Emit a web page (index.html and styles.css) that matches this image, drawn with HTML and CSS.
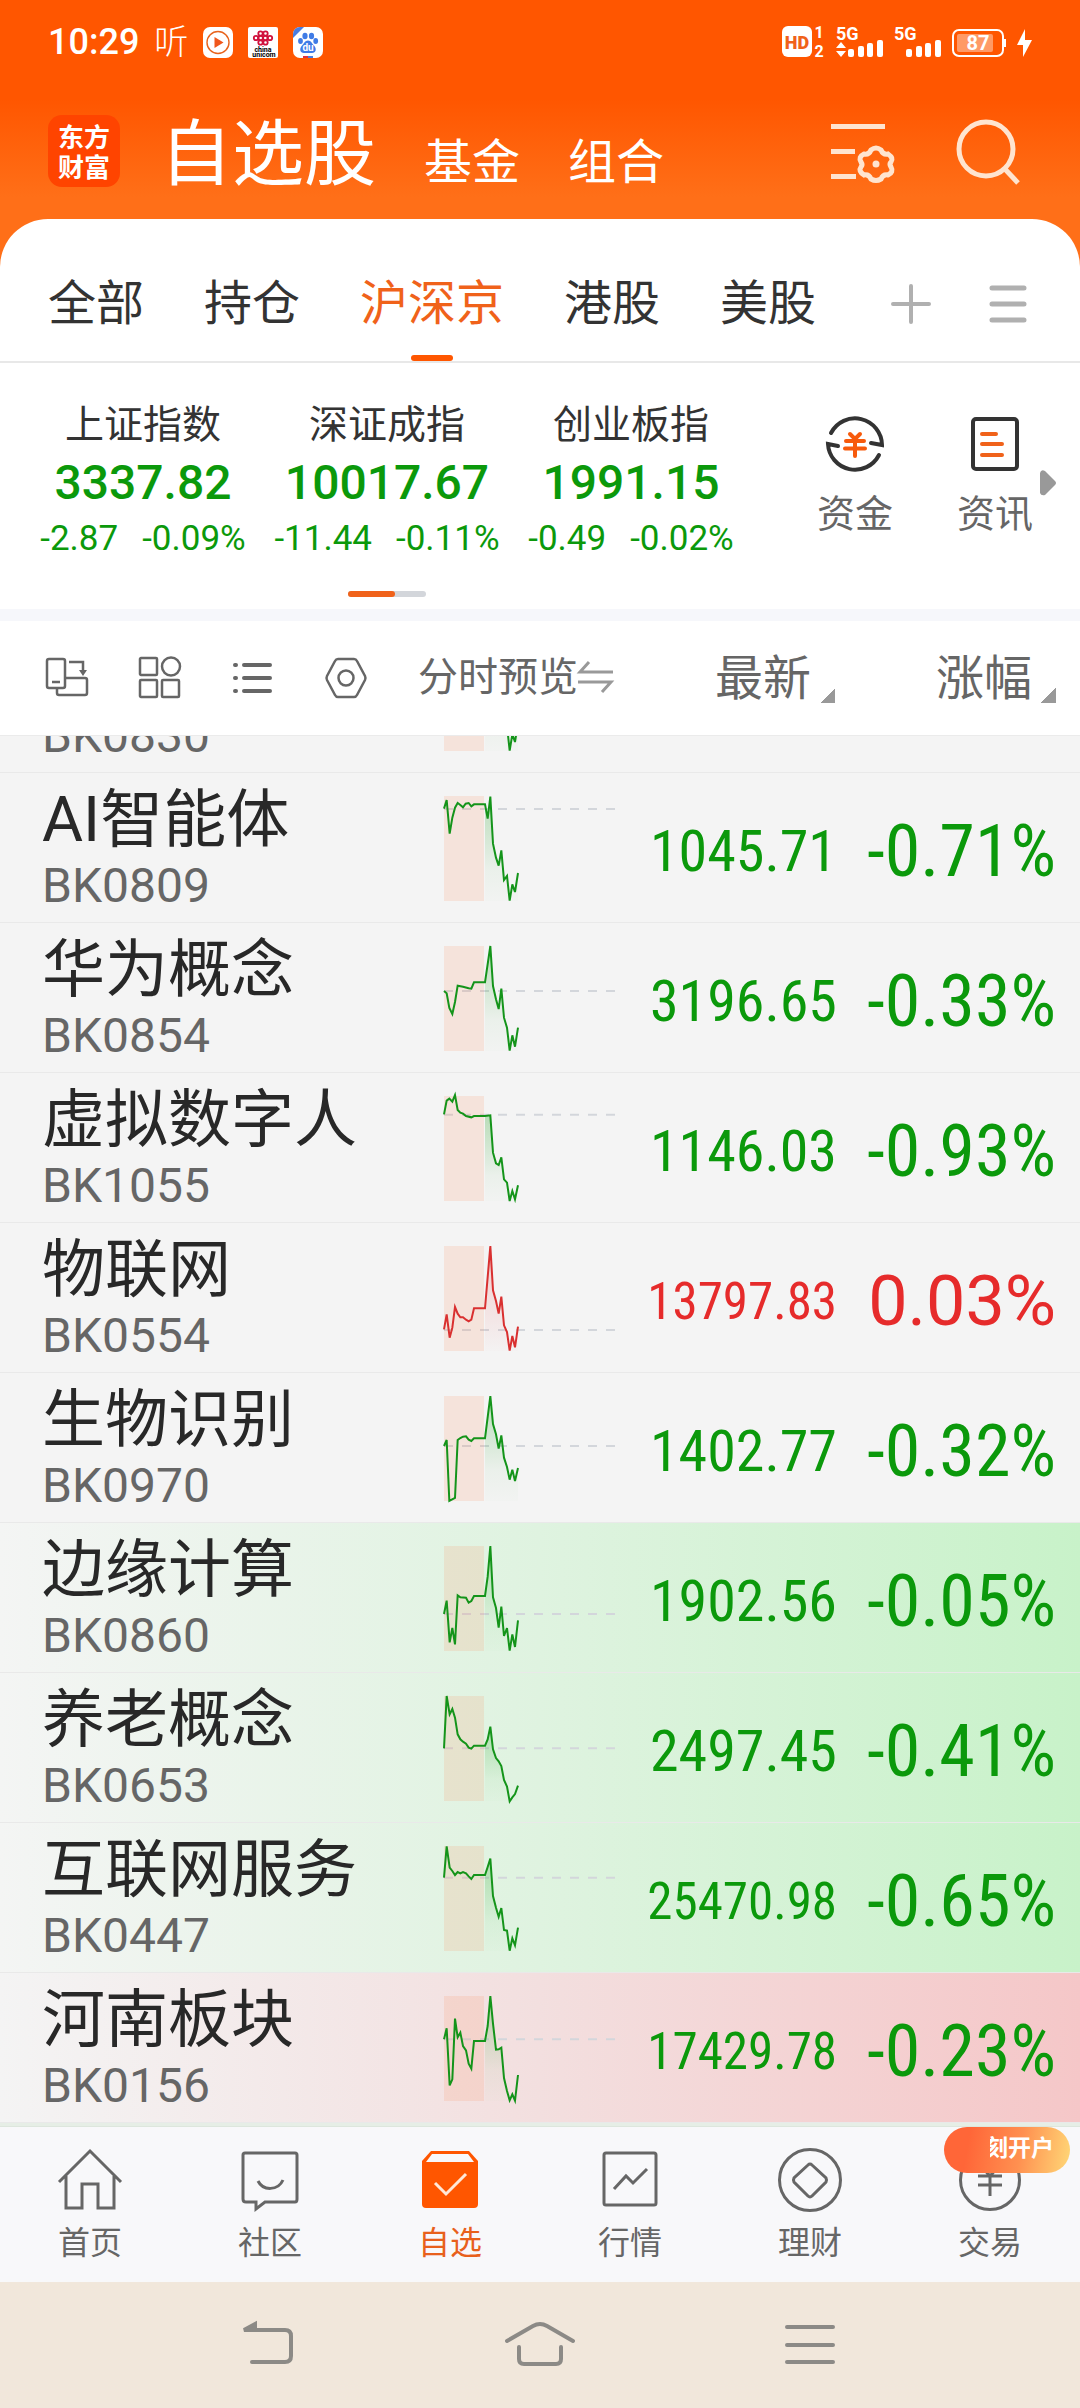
FILE: index.html
```html
<!DOCTYPE html>
<html lang="zh-CN">
<head>
<meta charset="UTF-8">
<meta name="viewport" content="width=device-width, initial-scale=1.0">
<title>自选股</title>
<link rel="stylesheet" href="styles.css">
</head>
<body>

<header class="top">
    <div class="status">
        <div class="status-left">
            <span class="clock">10:29</span>
            <span class="listen">听</span>
            <svg width="30" height="31" viewBox="0 0 30 31">
                <rect width="30" height="31" rx="7" fill="#fff"/>
                <circle cx="15" cy="15.500" r="11" fill="none" stroke="#e8631c" stroke-width="1.400"/>
                <path d="M11.500 10v11l9-5.500z" fill="#f0561c"/>
            </svg>
            <svg width="30" height="31" viewBox="0 0 30 31">
                <rect width="30" height="31" rx="2" fill="#fff"/>
                <g fill="none" stroke="#d0103c" stroke-width="1.800">
                    <circle cx="12.500" cy="6.500" r="2.200"/><circle cx="17.500" cy="6.500" r="2.200"/>
                    <circle cx="8" cy="11" r="2.200"/><circle cx="12.700" cy="11" r="2.200"/>
                    <circle cx="17.300" cy="11" r="2.200"/><circle cx="22" cy="11" r="2.200"/>
                    <circle cx="12.500" cy="15.500" r="2.200"/><circle cx="17.500" cy="15.500" r="2.200"/>
                </g>
                <text x="15" y="25" class="tiny">china</text>
                <text x="16" y="30" class="tiny">unicom</text>
            </svg>
            <svg width="30" height="31" viewBox="0 0 30 31">
                <rect width="30" height="31" rx="7" fill="#fff"/>
                <path d="M0 11V7a7 7 0 0 1 7-7h4z" fill="#4a7de0"/>
                <g fill="#3f7be6">
                    <ellipse cx="12" cy="9" rx="2.600" ry="3.300"/><ellipse cx="18.500" cy="9" rx="2.600" ry="3.300"/>
                    <ellipse cx="7.500" cy="14" rx="2.400" ry="3"/><ellipse cx="22.700" cy="14" rx="2.400" ry="3"/>
                    <path d="M15 13.500c3 0 4 3 6 5 3 3 2 7.500-2 7.500h-8c-4 0-5-4.500-2-7.500 2-2 3-5 6-5z"/>
                </g>
                <text x="15" y="24" class="du">du</text>
                <path d="M10 29h5v2h-5z" fill="#e0323c"/><path d="M15 29h5v2h-5z" fill="#4a7de0"/>
            </svg>
        </div>
        <div class="status-right">
            <svg width="44" height="32" viewBox="0 0 44 32">
                <rect y="0" width="30" height="31" rx="6" fill="#fff"/>
                <text x="15" y="23" class="hd">HD</text>
                <text x="37" y="12" class="sim">1</text>
                <text x="37" y="31" class="sim">2</text>
            </svg>
            <svg width="48" height="32" viewBox="0 0 48 32">
                <text x="0" y="14" class="net">5G</text>
                <path d="M5 16l5 6H0zM0 25h10l-5 6z" fill="#fff"/>
                <g fill="#fff"><rect x="12" y="23" width="6" height="8" rx="2"/><rect x="22" y="20" width="6" height="11" rx="2"/><rect x="31" y="17" width="6" height="14" rx="2"/><rect x="41" y="14" width="6" height="17" rx="2"/></g>
            </svg>
            <svg width="48" height="32" viewBox="0 0 48 32">
                <text x="0" y="14" class="net">5G</text>
                <g fill="#fff"><rect x="12" y="23" width="6" height="8" rx="2"/><rect x="22" y="20" width="6" height="11" rx="2"/><rect x="31" y="17" width="6" height="14" rx="2"/><rect x="41" y="14" width="6" height="17" rx="2"/></g>
            </svg>
            <svg width="55" height="32" viewBox="0 0 55 32">
                <rect x="1" y="4" width="50" height="26" rx="6" fill="none" stroke="#fff" stroke-width="2"/>
                <rect x="5" y="8" width="36" height="18" rx="2" fill="#ff9a66"/>
                <rect x="52" y="13" width="2" height="8" fill="#fff"/>
                <text x="26" y="24" class="battery">87</text>
            </svg>
            <svg width="15" height="32" viewBox="0 0 15 32">
                <path d="M8 3L0 19h6l0 12 9-17H8z" fill="#fff"/>
            </svg>
        </div>
    </div>
    <nav class="titlebar">
        <div class="logo"><span>东方</span><span>财富</span></div>
        <a href="#" class="title-big">自选股</a>
        <a href="#">基金</a>
        <a href="#">组合</a>
        <button class="manage" aria-label="管理">
            <svg width="64" height="66" viewBox="0 0 64 66" fill="none" stroke="#ffe4cf" stroke-width="5">
                <path d="M0 8.500h54M0 33.500h24M0 58.500h25"/>
                <path d="M40 32q5-4 10 0 2 5 7 4 6 4 3 8-2 2 0 5 3 5-3 8-5-1-7 4-5 3-10 0-2-5-7-4-6-4-3-8 2-2 0-5-3-5 3-8 5 1 7-4z"/>
                <circle cx="45" cy="46" r="3.500" fill="#ffe4cf" stroke="none"/>
            </svg>
        </button>
        <button class="search" aria-label="搜索">
            <svg width="64" height="66" viewBox="0 0 64 66" fill="none" stroke="#ffe4cf" stroke-width="5">
                <circle cx="29" cy="31" r="27"/>
                <path d="M47 50l14 15"/>
            </svg>
        </button>
    </nav>
</header>

<main class="sheet">
    <nav class="tabs">
        <a href="#">全部</a>
        <a href="#">持仓</a>
        <a href="#" class="active">沪深京</a>
        <a href="#">港股</a>
        <a href="#">美股</a>
        <button class="add" aria-label="添加">
            <svg width="40" height="40" viewBox="0 0 40 40" stroke="#b0b0b0" stroke-width="4" stroke-linecap="round"><path d="M2 20h36M20 2v36"/></svg>
        </button>
        <button aria-label="分组">
            <svg width="40" height="40" viewBox="0 0 40 40" stroke="#b0b0b0" stroke-width="5" stroke-linecap="round"><path d="M4 4h32M4 20h32M4 36h32"/></svg>
        </button>
    </nav>

    <section class="market">
        <div class="indices">
            <div class="index">
                <span class="index-name">上证指数</span>
                <strong>3337.82</strong>
                <span class="change"><span>-2.87</span><span>-0.09%</span></span>
            </div>
            <div class="index">
                <span class="index-name">深证成指</span>
                <strong>10017.67</strong>
                <span class="change"><span>-11.44</span><span>-0.11%</span></span>
            </div>
            <div class="index">
                <span class="index-name">创业板指</span>
                <strong>1991.15</strong>
                <span class="change"><span>-0.49</span><span>-0.02%</span></span>
            </div>
            <div class="pager"><i></i></div>
        </div>
        <a href="#" class="quick">
            <svg width="60" height="60" viewBox="0 0 60 60" fill="none" stroke="#333" stroke-width="4" stroke-linecap="round">
                <path d="M6 19A27 27 0 0 1 57 31l-11-2M54 41A27 27 0 0 1 3 30l10 2"/>
                <path d="M25 20l5 5 5-5M21 27h18M20 34.500h20M30 26v16" stroke="#f75a0c"/>
            </svg>
            <span>资金</span>
        </a>
        <a href="#" class="quick quick-news">
            <svg width="60" height="60" viewBox="0 0 60 60" fill="none" stroke="#333" stroke-width="4" stroke-linecap="round">
                <rect x="8" y="5" width="44" height="50" rx="3"/>
                <path d="M17 20h14M17 30h20M17 41h20" stroke="#f0621a"/>
            </svg>
            <span>资讯</span>
        </a>
        <svg class="more" width="16" height="26" viewBox="0 0 16 26"><path d="M0 3q1-4 5-2l10 10q2 2 0 4L5 25q-4 1-5-2z" fill="#999"/></svg>
    </section>

    <section class="toolbar">
        <button aria-label="横屏">
            <svg width="42" height="42" viewBox="0 0 42 42" fill="none" stroke="#666" stroke-width="2.500">
                <rect x="1" y="2" width="18" height="29" rx="2"/><path d="M6 25h8M11 31v5q0 2 2 2h26q2 0 2-2V23q0-2-2-2H19M23 5h14v10"/><path d="M33 13h8l-4 6z" fill="#666" stroke="none"/>
            </svg>
        </button>
        <button aria-label="宫格">
            <svg width="42" height="42" viewBox="0 0 42 42" fill="none" stroke="#666" stroke-width="2.500">
                <rect x="1" y="1" width="17" height="17" rx="1"/><circle cx="32" cy="9.500" r="9"/><rect x="1" y="23" width="17" height="17" rx="1"/><rect x="23" y="23" width="17" height="17" rx="1"/>
            </svg>
        </button>
        <button aria-label="列表">
            <svg width="42" height="42" viewBox="0 0 42 42" stroke="#666" stroke-width="4" stroke-linecap="round">
                <path d="M3 8h1M3 21h1M3 34h1M12 8h26M12 21h26M12 34h26"/>
            </svg>
        </button>
        <button aria-label="设置">
            <svg width="42" height="42" viewBox="0 0 42 42" fill="none" stroke="#666" stroke-width="2.500" stroke-linejoin="round">
                <path d="M13 2h16q2 0 3 2l8 15q1 2 0 4l-8 15q-1 2-3 2H13q-2 0-3-2L2 23q-1-2 0-4l8-15q1-2 3-2z"/><circle cx="21" cy="21" r="7.500"/>
            </svg>
        </button>
        <button class="preview">分时预览<svg width="36" height="32" viewBox="0 0 36 32" fill="none" stroke="#999" stroke-width="3"><path d="M11 1L2 11h33M0 21h33l-9 10"/></svg></button>
        <button class="sort">最新<i></i></button>
        <button class="sort">涨幅<i></i></button>
    </section>

    <div class="list">
        <svg width="0" height="0" class="defs">
            <linearGradient id="fade-down" x1="0" y1="0" x2="0" y2="1"><stop offset="0" stop-color="#0b990b" stop-opacity=".26"/><stop offset=".7" stop-color="#0b990b" stop-opacity=".04"/><stop offset="1" stop-color="#0b990b" stop-opacity=".01"/></linearGradient>
            <linearGradient id="fade-up" x1="0" y1="0" x2="0" y2="1"><stop offset="0" stop-color="#e62b2b" stop-opacity=".2"/><stop offset="1" stop-color="#e62b2b" stop-opacity=".01"/></linearGradient>
        </svg>
        <table>
            <tbody id="stocks"></tbody>
        </table>
    </div>
</main>

<nav class="bottom">
    <a href="#">
        <svg width="66" height="66" viewBox="0 0 66 66"><path d="M2 35L33 4l31 31M9 29v32h16V37h16v24h16V29"/></svg>
        首页
    </a>
    <a href="#">
        <svg width="66" height="66" viewBox="0 0 66 66"><path d="M8 6h50q2 0 2 2v44q0 3-2 3H28l-9 7v-7H9q-3 0-3-3V8q0-2 2-2zM21 34c5 10 20 10 25-1"/></svg>
        社区
    </a>
    <a href="#" class="on">
        <svg width="66" height="66" viewBox="0 0 66 66"><path d="M14 4h38l9 10v43q0 4-4 4H9q-4 0-4-4V14z" fill="#ff5600" stroke="none"/><path d="M15 7h36l6 8H9z" fill="#f8f8fa" stroke="none"/><path d="M18 36l11 11 20-20" stroke="#ffe8d8"/></svg>
        自选
    </a>
    <a href="#">
        <svg width="66" height="66" viewBox="0 0 66 66"><rect x="7" y="6" width="52" height="52" rx="2"/><path d="M17 42l12-13 7 7 14-14"/></svg>
        行情
    </a>
    <a href="#">
        <svg width="66" height="66" viewBox="0 0 66 66"><circle cx="33" cy="33" r="30.500"/><path d="M31 18q2-2 4 0l14 13q1 2 0 4L35 49q-2 2-4 0L17 35q-1-2 0-4z"/></svg>
        理财
    </a>
    <a href="#">
        <svg width="66" height="66" viewBox="0 0 66 66"><circle cx="33" cy="33" r="29.500"/><path d="M24 19l9 10 9-10M21 29h24M21 38h24M33 29v20"/></svg>
        交易
        <span class="badge"><span>刻开户</span></span>
    </a>
</nav>

<footer class="system">
    <button aria-label="返回"><svg width="66" height="54" viewBox="0 0 66 54"><path d="M11 12h37q6 0 6 6v20q0 6-6 6H15"/><path d="M7 12l11-6v6z" fill="#8c8a86"/></svg></button>
    <button aria-label="主页"><svg width="72" height="54" viewBox="0 0 72 54"><path d="M3 23L29 8q7-4 14 0l26 15M15 29v12q0 5 5 5h32q5 0 5-5V29"/></svg></button>
    <button aria-label="最近任务"><svg width="66" height="54" viewBox="0 0 66 54"><path d="M10 9h46M10 27h46M10 44h46"/></svg></button>
</footer>

<script src="script.js"></script>
</body>
</html>
```
FILE: styles.css
```css
* {
    box-sizing: border-box;
}

body {
    margin: 0;
    height: 100vh;
    display: flex;
    flex-direction: column;
    font-family: Roboto, "Noto Sans CJK SC", sans-serif;
    background-color: #ff6f18;
    color: #333;
    overflow: hidden;
}

a {
    color: inherit;
    text-decoration: none;
}

button {
    border: 0;
    padding: 0;
    background: none;
    font: inherit;
    color: inherit;
}

svg {
    display: block;
    flex: none;
    overflow: visible;
}

/* En-tête orange */
.top {
    background: linear-gradient(#ff5600 45%, #ff6f18 90%);
    color: #fff;
}

.status {
    height: 84px;
    padding: 0 48px;
    display: flex;
    align-items: center;
    justify-content: space-between;
}

.status-left,
.status-right {
    display: flex;
    align-items: center;
    gap: 15px;
}

.status-right {
    gap: 10px;
}

.clock {
    font-size: 36px;
    font-weight: 500;
}

.listen {
    font-size: 34px;
    font-weight: 300;
    line-height: 36px;
}

.tiny {
    font-size: 7px;
    font-weight: 700;
    text-anchor: middle;
}

.du {
    font-size: 10px;
    font-weight: 700;
    fill: #fff;
    text-anchor: middle;
}

.hd {
    font-size: 18px;
    font-weight: 900;
    fill: #f0621a;
    text-anchor: middle;
}

.sim,
.net,
.battery {
    font-size: 18px;
    font-weight: 700;
    fill: #fff;
}

.sim {
    font-size: 16px;
    text-anchor: middle;
}

.battery {
    font-size: 20px;
    text-anchor: middle;
}

.titlebar {
    height: 135px;
    padding: 19px 59px 0 48px;
    display: flex;
    align-items: baseline;
    gap: 48px;
    font-size: 48px;
    line-height: 104px;
}

.titlebar .title-big {
    font-size: 72px;
    margin-left: -8px;
}

.logo {
    width: 72px;
    height: 72px;
    border-radius: 14px;
    background-color: #ff4400;
    align-self: flex-start;
    margin-top: 12px;
    display: flex;
    flex-direction: column;
    justify-content: center;
    align-items: center;
    font-family: "Noto Sans CJK SC", sans-serif;
    font-size: 26px;
    font-weight: 700;
    line-height: 30px;
}

.manage {
    margin-left: auto;
}

.titlebar button {
    align-self: flex-start;
    margin-top: 15px;
}

.search {
    margin-left: 14px;
}

/* Feuille blanche */
.sheet {
    flex: 1;
    min-height: 0;
    display: flex;
    flex-direction: column;
    background-color: #fff;
    border-radius: 48px 48px 0 0;
}

.tabs {
    height: 144px;
    padding: 27px 52px 0 48px;
    display: flex;
    gap: 57px;
    font-size: 48px;
    line-height: 115px;
    border-bottom: 2px solid #e8e8e8;
}

.tabs a {
    margin-right: 3px;
}

.tabs .active {
    position: relative;
    color: #f0621a;
}

.tabs .active::after {
    content: "";
    position: absolute;
    left: 50%;
    bottom: 0;
    width: 42px;
    height: 6px;
    margin-left: -21px;
    border-radius: 3px;
    background-color: #ff5600;
}

.tabs .add {
    margin-left: auto;
}

.market {
    position: relative;
    height: 246px;
    padding-left: 21px;
    display: flex;
    align-items: flex-start;
}

.indices {
    display: grid;
    grid-template-columns: repeat(3, 244px);
    padding-top: 33px;
}

.index {
    display: flex;
    flex-direction: column;
    align-items: center;
    color: #0b990b;
}

.index-name {
    font-size: 39px;
    line-height: 58px;
    color: #333;
}

.index strong {
    font-size: 48px;
    font-weight: 500;
    line-height: 58px;
}

.change {
    display: flex;
    gap: 24px;
    font-size: 35px;
    line-height: 54px;
}

.pager {
    grid-column: 1 / 4;
    justify-self: center;
    width: 78px;
    height: 6px;
    margin-top: 25px;
    border-radius: 3px;
    background-color: #d3d6db;
}

.pager i {
    display: block;
    width: 47px;
    height: 6px;
    border-radius: 3px;
    background-color: #f0621a;
}

.quick {
    flex: 1;
    display: flex;
    flex-direction: column;
    align-items: center;
    gap: 12px;
    padding-top: 51px;
    margin-left: 32px;
    font-size: 38px;
    line-height: 56px;
    color: #666;
}

.quick-news {
    margin: 0 15px 0 0;
}

.more {
    position: absolute;
    right: 24px;
    top: 107px;
}

.toolbar {
    height: 127px;
    padding: 0 24px 0 46px;
    display: flex;
    align-items: center;
    gap: 51px;
    border-top: 12px solid #f6f7fb;
    border-bottom: 1px solid #ebebeb;
    font-size: 48px;
    color: #666;
}

.preview,
.sort {
    display: flex;
    align-items: center;
    padding-bottom: 8px;
}

.preview {
    font-size: 40px;
}

.preview svg {
    margin-top: 6px;
}

.sort {
    gap: 9px;
    margin-left: auto;
}

.sort i {
    width: 15px;
    height: 15px;
    margin-top: 43px;
    background: linear-gradient(135deg, transparent 50%, #999 50%);
}

/* Liste des valeurs */
.list {
    flex: 1;
    min-height: 0;
    overflow: hidden;
    background-color: #f4f4f4;
}

.defs {
    position: absolute;
}

table {
    width: 100%;
    margin-top: -113px;
    border-collapse: collapse;
    table-layout: fixed;
}

tr {
    height: 150px;
    box-shadow: inset 0 -1px #e9e9e9;
}

.green {
    background: linear-gradient(to right, #f4f5f4, #dff3e0 50%, #c8f2c9);
}

.pink {
    background: linear-gradient(to right, #f4f4f4, #f3dfdf 50%, #f5c7c8);
}

.next {
    background-color: #e6eee6;
}

td {
    padding: 0;
    white-space: nowrap;
    text-align: right;
    color: #0b990b;
}

.col-name {
    width: 442px;
    padding-left: 42px;
    text-align: left;
    color: #282828;
}

.name {
    display: block;
    font-size: 63px;
    line-height: 76px;
}

.code {
    display: block;
    font-size: 48px;
    line-height: 56px;
    color: #666;
}

.col-chart {
    width: 176px;
}

.chart .line {
    fill: none;
    stroke: #14941a;
    stroke-width: 6;
}

.up .chart .line {
    stroke: #d93030;
}

.chart .session {
    fill: #ff8248;
    fill-opacity: .14;
}

.chart .base {
    stroke: #d3d6db;
    stroke-width: 6;
    stroke-dasharray: 27;
}

.col-price,
.col-rate {
    padding-top: 6px;
    font-family: "Roboto Condensed", Roboto, sans-serif;
}

.col-price {
    font-size: 58px;
}

.col-price.long {
    font-size: 51px;
}

.col-rate {
    width: 243px;
    padding-right: 24px;
    font-size: 72px;
}

.up td.col-price,
.up td.col-rate {
    color: #e62b2b;
}

.up td.col-rate {
    font-family: Roboto, sans-serif;
    font-size: 70px;
}

/* Navigation du bas */
.bottom {
    height: 156px;
    display: grid;
    grid-template-columns: repeat(6, 1fr);
    background-color: #f8f8fa;
    border-top: 1px solid #dde6dd;
    font-size: 32px;
    line-height: 44px;
    color: #666;
}

.bottom a {
    position: relative;
    display: flex;
    flex-direction: column;
    align-items: center;
    gap: 8px;
    padding-top: 20px;
}

.bottom svg {
    fill: none;
    stroke: #666;
    stroke-width: 3;
}

.bottom .on {
    color: #e8601c;
}

.badge {
    position: absolute;
    top: 0;
    right: 10px;
    width: 126px;
    height: 46px;
    padding-right: 16px;
    border-radius: 23px;
    display: flex;
    justify-content: flex-end;
    background: linear-gradient(100deg, #ff6638 20%, #ff9050 60%, #ffd877);
    color: #fff;
    font-size: 23px;
    font-weight: 700;
    white-space: nowrap;
}

.badge span {
    width: 64px;
    display: flex;
    justify-content: flex-end;
    overflow: hidden;
}

.system {
    height: 126px;
    padding: 0 135px;
    display: grid;
    grid-template-columns: repeat(3, 1fr);
    align-items: center;
    justify-items: center;
    background-color: #f1e7db;
}

.system svg {
    fill: none;
    stroke: #8c8a86;
    stroke-width: 4;
    stroke-linecap: round;
}
```
FILE: script.js
```js
// nom, code, cours, variation, classe, ligne de base, points de la courbe
var stocks = [
    ["", "BK0830", "", "", "first", 39, "123,25 131,68 139,2 147,143 156,185 164,209 172,163 180,252 189,240 197,314 205,265 213,288 222,231"],
    ["AI智能体", "BK0809", "1045.71", "-0.71%", "", 39, "0,38 8,12 17,113 25,65 33,35 41,21 49,27 57,34 65,23 74,21 82,31 90,25 123,25 131,68 139,2 147,143 156,185 164,209 172,163 180,252 189,240 197,314 205,265 213,288 222,231"],
    ["华为概念", "BK0854", "3196.65", "-0.33%", "", 135, "0,135 8,142 16,186 25,204 33,168 41,119 57,122 74,127 82,128 90,109 123,109 139,0 147,120 156,160 164,189 172,128 180,215 189,245 197,314 205,268 213,302 222,245"],
    ["虚拟数字人", "BK1055", "1146.03", "-0.93%", "", 56, "0,55 8,14 16,8 25,17 33,-3 41,42 49,50 57,53 66,60 82,64 90,60 123,60 139,58 147,170 156,202 164,207 172,184 180,250 189,260 197,315 205,285 213,310 222,268"],
    ["物联网", "BK0554", "13797.83", "0.03%", "up", 252, "0,250 8,205 17,275 25,245 33,183 41,203 49,214 57,214 66,221 74,226 82,221 90,187 123,187 139,0 147,133 156,165 164,203 172,152 180,238 189,258 197,314 205,270 213,304 222,242"],
    ["生物识别", "BK0970", "1402.77", "-0.32%", "", 150, "0,150 8,132 16,315 33,306 41,132 49,126 57,122 66,121 74,131 82,135 90,127 123,127 139,0 147,84 156,115 164,158 172,118 180,185 189,213 197,251 205,221 213,255 222,216"],
    ["边缘计算", "BK0860", "1902.56", "-0.05%", "green", 204, "0,204 8,164 17,289 25,246 33,295 41,148 49,154 66,155 74,170 82,165 90,150 123,150 131,92 139,0 147,154 156,186 164,245 172,182 180,270 189,246 197,314 205,265 213,303 222,223"],
    ["养老概念", "BK0653", "2497.45", "-0.41%", "green", 157, "0,157 8,0 17,55 25,39 33,65 41,115 49,130 57,137 66,143 74,155 82,158 90,149 123,149 131,130 139,92 147,160 156,186 164,196 172,210 180,252 189,272 197,316 205,304 213,294 222,269"],
    ["互联网服务", "BK0447", "25470.98", "-0.65%", "green", 95, "0,95 8,1 17,65 25,75 33,87 41,78 49,82 57,78 66,82 74,91 82,99 90,87 123,87 131,63 139,38 147,150 156,185 164,212 172,186 180,252 189,254 197,314 205,277 213,298 222,245"],
    ["河南板块", "BK0156", "17429.78", "-0.23%", "pink", 130, "0,130 8,97 17,268 25,250 33,68 41,124 49,110 57,150 66,163 74,203 82,218 90,135 123,135 131,90 139,0 147,83 156,161 164,160 172,155 180,246 189,285 197,313 205,295 213,314 222,237"]
];

function chart(base, points, up) {
    // la zone dégradée commence après la séance d'ouverture
    var area = points.split(" ").filter(function(p) {
        return parseInt(p) >= 123;
    }).join(" ") + " 222,315 123,315";

    return '<svg class="chart" width="176" height="109" viewBox="-6 -6 528 327">' +
        '<line class="base" x1="0" y1="' + base + '" x2="513" y2="' + base + '"/>' +
        '<rect class="session" width="120" height="315"/>' +
        '<polygon points="' + area + '" fill="url(#fade-' + (up ? "up" : "down") + ')"/>' +
        '<polyline class="line" points="' + points + '"/></svg>';
}

var html = "";
stocks.forEach(function(s) {
    html += '<tr class="' + s[4] + '">' +
        '<td class="col-name"><span class="name">' + (s[0] || "&nbsp;") + '</span><span class="code">' + s[1] + '</span></td>' +
        '<td class="col-chart">' + chart(s[5], s[6], s[4] === "up") + '</td>' +
        '<td class="col-price' + (s[2].length > 7 ? " long" : "") + '">' + s[2] + '</td>' +
        '<td class="col-rate">' + s[3] + '</td></tr>';
});
html += '<tr class="next"><td></td><td></td><td></td><td></td></tr>';

document.getElementById("stocks").innerHTML = html;
```
